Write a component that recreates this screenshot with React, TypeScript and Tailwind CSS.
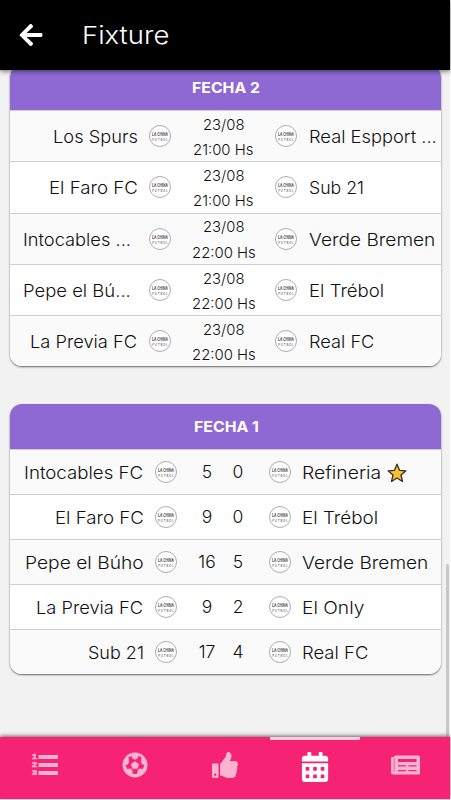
import React, { useLayoutEffect, useRef, useState } from 'react';
import { FaArrowLeft, FaCalendarAlt, FaThumbsUp } from 'react-icons/fa';

type Side = { name: string; width: number; gap?: boolean; star?: boolean };
type Upcoming = { home: Side; away: Side; date: string; time: string };
type Played = { home: Side; away: Side; score: [string, string] };

const upcoming: Upcoming[] = [
    { home: { name: 'Los Spurs', width: 84 }, away: { name: 'Real Espport ...', width: 127 }, date: '23/08', time: '21:00 Hs' },
    { home: { name: 'El Faro FC', width: 88 }, away: { name: 'Sub 21', width: 54 }, date: '23/08', time: '21:00 Hs' },
    { home: { name: 'Intocables ...', width: 107, gap: true }, away: { name: 'Verde Bremen', width: 126 }, date: '23/08', time: '22:00 Hs' },
    { home: { name: 'Pepe el Bú...', width: 107, gap: true }, away: { name: 'El Trébol', width: 75 }, date: '23/08', time: '22:00 Hs' },
    { home: { name: 'La Previa FC', width: 107 }, away: { name: 'Real FC', width: 65 }, date: '23/08', time: '22:00 Hs' },
];

const played: Played[] = [
    { home: { name: 'Intocables FC', width: 119 }, away: { name: 'Refineria', width: 79, star: true }, score: ['5', '0'] },
    { home: { name: 'El Faro FC', width: 88 }, away: { name: 'El Trébol', width: 76 }, score: ['9', '0'] },
    { home: { name: 'Pepe el Búho', width: 118 }, away: { name: 'Verde Bremen', width: 126 }, score: ['16', '5'] },
    { home: { name: 'La Previa FC', width: 107 }, away: { name: 'El Only', width: 62 }, score: ['9', '2'] },
    { home: { name: 'Sub 21', width: 55 }, away: { name: 'Real FC', width: 66 }, score: ['17', '4'] },
];

// Stretches a label horizontally to the given width
const Fit: React.FC<{ text: string; width: number }> = ({ text, width }) => {
    const ref = useRef<HTMLSpanElement>(null);
    const [scale, setScale] = useState(1);
    useLayoutEffect(() => {
        if (ref.current) setScale((width + 0.5) / ref.current.offsetWidth);
    }, [width]);
    return (
        <span className="inline-block shrink-0 text-left" style={{ width }}>
            <span ref={ref} className="inline-block origin-left whitespace-nowrap" style={{ transform: `scaleX(${scale})` }}>
                {text}
            </span>
        </span>
    );
};

const TeamLogo: React.FC = () => (
    <svg viewBox="0 0 22 22" className="h-[22px] w-[22px] shrink-0 overflow-visible">
        <circle cx="11" cy="11" r="10.500" fill="#fff" stroke="#a4a4a4" strokeWidth=".9" />
        <text x="3" y="10.700" fontSize="5.200" fontWeight="700" fill="#555" textLength="16" lengthAdjust="spacingAndGlyphs" fontFamily="Roboto, sans-serif">LA CHINA</text>
        <text x="3.200" y="15.600" fontSize="3" fontWeight="500" fill="#777" textLength="15.600" fontFamily="Roboto, sans-serif">FUTBOL</text>
    </svg>
);

const Star: React.FC = () => (
    <svg viewBox="0 0 20 20" className="ml-[6px] h-5 w-5">
        <path d="M10 1.2l2.500 6.100 6.400.5-4.900 4.200 1.500 6.500-5.500-3.500-5.500 3.500L6 12 1.100 7.800l6.400-.5z" fill="#ffc02d" stroke="#302c28" strokeWidth="1.3" strokeLinejoin="round" />
    </svg>
);

const NumberedList: React.FC = () => (
    <svg viewBox="0 0 26 26" className="h-[26px] w-[26px] overflow-visible" fill="#fdb4d1">
        <g fontFamily="Liberation Sans, sans-serif" fontWeight="700" fontSize="6.800" stroke="#fdb4d1" strokeWidth=".5">
            <text x="0" y="7.400" textLength="5" lengthAdjust="spacingAndGlyphs">1</text>
            <text x="0" y="15.400" textLength="5" lengthAdjust="spacingAndGlyphs">2</text>
            <text x="0" y="23.400" textLength="5" lengthAdjust="spacingAndGlyphs">3</text>
        </g>
        <rect x="6.500" y="3" width="19.500" height="4" />
        <rect x="6.500" y="11" width="19.500" height="4" />
        <rect x="6.500" y="19" width="19.500" height="4" />
    </svg>
);

const Ball: React.FC = () => (
    <svg viewBox="0 0 26 26" className="h-[26px] w-[26px]">
        <circle cx="13" cy="13" r="12.500" fill="#fdb4d1" />
        <path
            d="M6.500 5l3.300-.7L10.500 6.500 13 7.800l2.500-1.300.7-2.200 3.300.7-.5 5.200 1.200 2.200 2.300.6-1.700 4-3.500-.4-1.600 1.600-.6 3.900h-4.200l-.6-3.900-1.600-1.600-3.500.4-1.700-4 2.300-.6L7 10.200z"
            fill="#f62274"
        />
        <path d="M13 9.500l3.800 2.700-1.500 4.400h-4.600l-1.500-4.400z" fill="#fdb4d1" stroke="#fdb4d1" strokeWidth=".6" strokeLinejoin="round" />
    </svg>
);

const Newspaper: React.FC = () => (
    <svg viewBox="0 0 29 20" className="h-5 w-[29px]">
        <path d="M4.500.5h23q1.500 0 1.500 1.500v16q0 1.500-1.500 1.500H2.500Q0 19.500 0 17.500V3q0-1 1-1h2q0-1.500 1.500-1.500z" fill="#fdb4d1" />
        <path d="M3.200 3v14" stroke="#f62274" strokeWidth=".6" />
        <path d="M7 4h18.500v3H7zM7 10.200h8v1.300H7zM17.500 10.200h8v1.300h-8zM7 15h8v1.300H7zM17.500 15h8v1.300h-8z" fill="#f62274" />
    </svg>
);

const Card: React.FC<{ title: string; width: number; children: React.ReactNode }> = ({ title, width, children }) => (
    <section className="w-[431px] overflow-hidden rounded-[12px] bg-white shadow-[0_1px_2px_rgba(0,0,0,0.6)]">
        <h2 className="flex h-[45px] items-center justify-center bg-[#8f69d3] pt-[2px] text-[15px] font-bold text-white">
            <Fit text={title} width={width} />
        </h2>
        {children}
    </section>
);

const App: React.FC = () => {
    return (
        <div className="h-[800px] w-[451px] overflow-hidden bg-white font-[Inter,sans-serif] text-[#111]">
            <div className="flex h-[799px] w-[450px] flex-col bg-[#f2f2f2]">
                {/* Header */}
                <header className="z-10 flex h-[70px] shrink-0 items-center bg-black pl-[18px] text-white shadow-[0_1px_5px_rgba(0,0,0,0.6)]">
                    <FaArrowLeft className="h-[26px] w-[26px]" />
                    <h1 className="ml-[38px] pt-px text-[24.500px] font-light">
                        <Fit text="Fixture" width={87} />
                    </h1>
                </header>

                <main className="flex min-h-0 flex-1 justify-between overflow-hidden pl-[10px]">
                    <div className="-mt-[5px] flex flex-col gap-[37.500px]">
                        <Card title="FECHA 2" width={67}>
                            {upcoming.map((match) => (
                                <div key={match.home.name} className="flex h-[51.300px] items-center border-t border-[#cfcfcf] text-[17.500px] font-light odd:bg-white even:bg-[#fafafa]">
                                    <div className={`flex w-[127px] justify-end pt-[2px] ${match.home.gap ? 'pr-[7px]' : 'pr-[0.5px]'}`}>
                                        <Fit text={match.home.name} width={match.home.width} />
                                    </div>
                                    <div className="ml-3"><TeamLogo /></div>
                                    <div className="flex w-[104px] flex-col items-center pt-[2px] text-[15px] leading-[25.500px]">
                                        <Fit text={match.date} width={41} />
                                        <Fit text={match.time} width={match.time[1] === '1' ? 60 : 63} />
                                    </div>
                                    <TeamLogo />
                                    <div className="ml-[11.500px] pt-[2px]">
                                        <Fit text={match.away.name} width={match.away.width} />
                                    </div>
                                </div>
                            ))}
                        </Card>

                        <Card title="FECHA 1" width={64}>
                            {played.map((match) => (
                                <div key={match.home.name} className="flex h-[45px] items-center border-t border-[#cfcfcf] text-[17.500px] font-light odd:bg-white even:bg-[#fafafa]">
                                    <div className="flex w-[133px] justify-end pt-[2px] pr-[0.5px]">
                                        <Fit text={match.home.name} width={match.home.width} />
                                    </div>
                                    <div className="ml-3"><TeamLogo /></div>
                                    <div className="flex w-[92px] justify-center pr-px">
                                        <span className="w-[31px] text-center">{match.score[0]}</span>
                                        <span className="w-[31px] text-center">{match.score[1]}</span>
                                    </div>
                                    <TeamLogo />
                                    <div className="ml-[11px] flex items-center pt-[2px]">
                                        <Fit text={match.away.name} width={match.away.width} />
                                        {match.away.star && <Star />}
                                    </div>
                                </div>
                            ))}
                        </Card>
                    </div>
                    {/* Scroll thumb */}
                    <div className="mt-[494px] mr-px w-[3px] rounded-t-full bg-[#c8c8c8]" />
                </main>

                {/* Tab bar */}
                <nav className="z-10 grid h-[62px] shrink-0 grid-cols-5 bg-[#f62274] text-[#fdb4d1] shadow-[0_-1px_4px_rgba(0,0,0,0.6)]">
                    <div className="flex items-center justify-center pb-[6px]"><NumberedList /></div>
                    <div className="flex items-center justify-center pb-[6px]"><Ball /></div>
                    <div className="flex items-center justify-center pb-[6px]"><FaThumbsUp className="h-[26px] w-[26px]" /></div>
                    <div className="flex items-center justify-center border-t-[3px] border-[#fccbdd] pb-[6px] text-white">
                        <FaCalendarAlt className="h-[30px] w-[30px]" />
                    </div>
                    <div className="flex items-center justify-center pb-[6px]"><Newspaper /></div>
                </nav>
            </div>
        </div>
    );
};

export default App;
